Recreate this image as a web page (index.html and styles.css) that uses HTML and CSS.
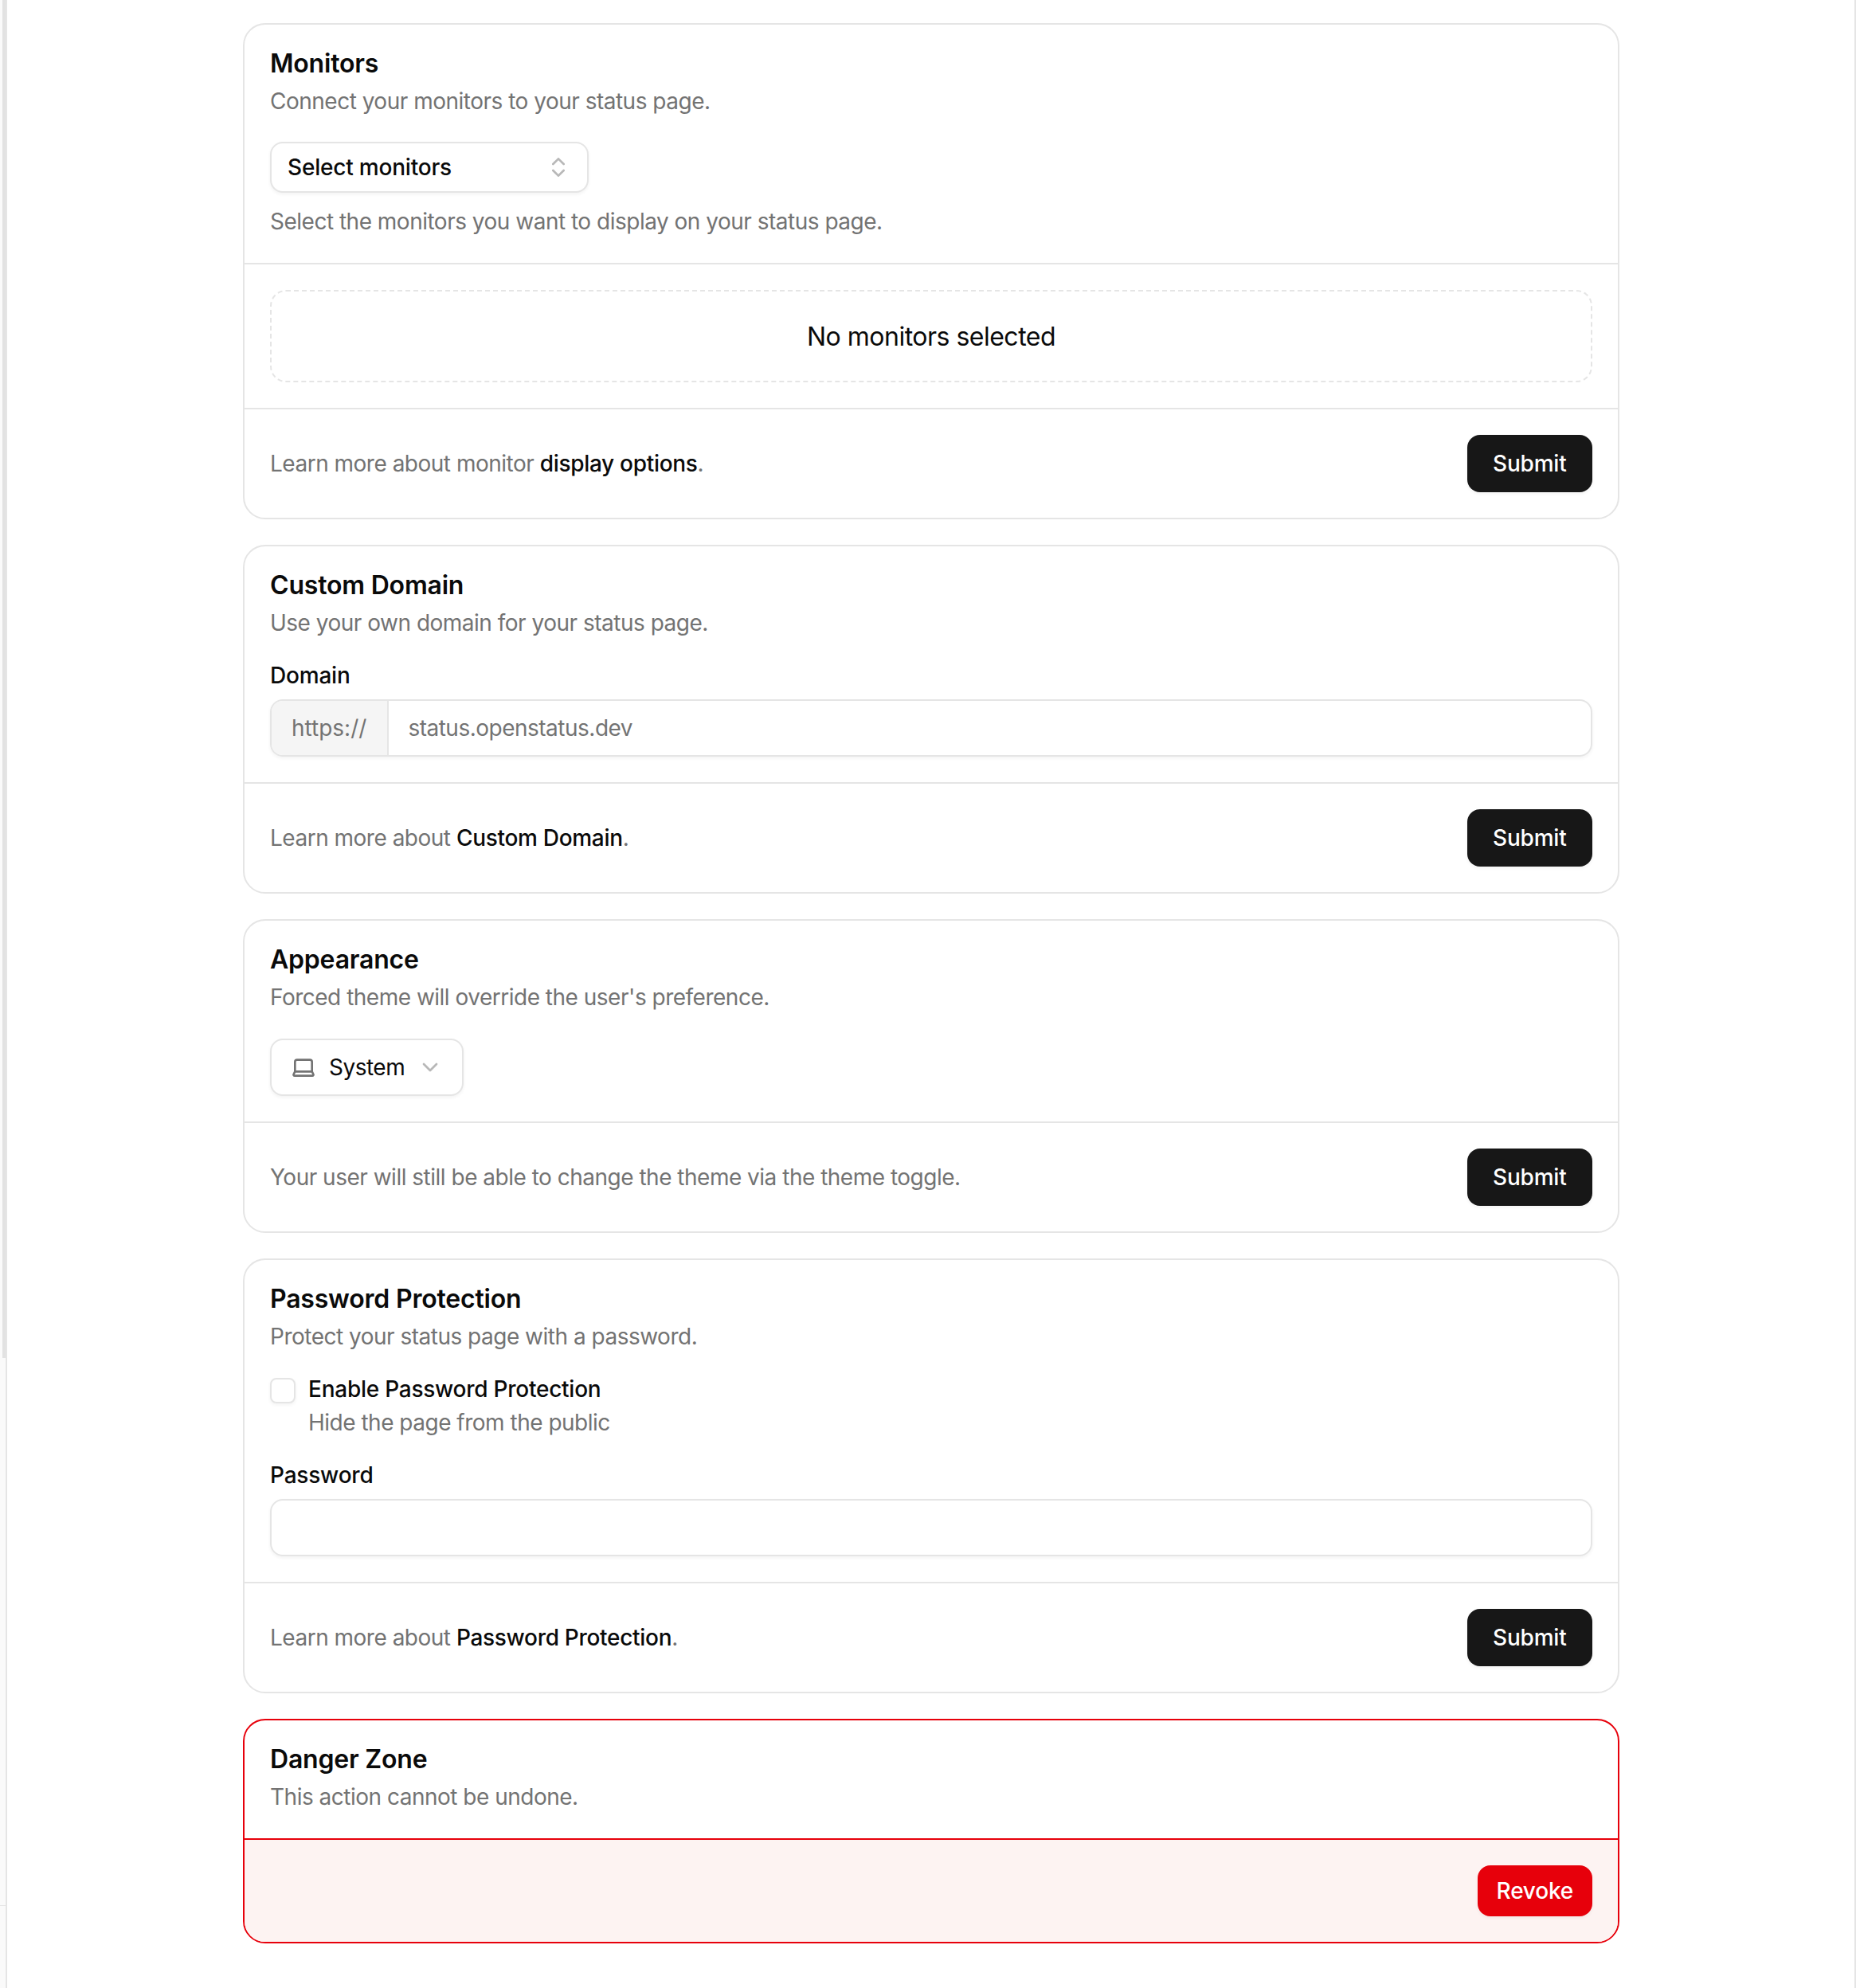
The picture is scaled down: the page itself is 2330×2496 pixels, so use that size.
FILE: index.html
```html
<!DOCTYPE html>
<html lang="en">
<head>
    <meta charset="UTF-8">
    <meta name="viewport" content="width=device-width, initial-scale=1.0">
    <title>Status page settings</title>
    <link rel="stylesheet" href="styles.css">
</head>
<body>

<aside class="rail">
    <div class="rail-thumb"></div>
    <div class="rail-foot"></div>
</aside>

<main class="page">

    <form class="card">
        <section class="card-section">
            <h2 class="card-title">Monitors</h2>
            <p class="card-desc">Connect your monitors to your status page.</p>
            <button type="button" class="monitor-select">
                <span>Select monitors</span>
                <svg class="icon icon-faded" viewBox="0 0 24 24"><path d="m7 15 5 5 5-5"/><path d="m7 9 5-5 5 5"/></svg>
            </button>
            <p class="field-help">Select the monitors you want to display on your status page.</p>
        </section>
        <section class="card-section">
            <div class="empty-box">No monitors selected</div>
        </section>
        <footer class="card-footer">
            <p>Learn more about monitor <a href="#">display options</a>.</p>
            <button type="button" class="btn-submit">Submit</button>
        </footer>
    </form>

    <form class="card">
        <section class="card-section">
            <h2 class="card-title">Custom Domain</h2>
            <p class="card-desc">Use your own domain for your status page.</p>
            <label class="field-label" for="domain">Domain</label>
            <div class="input-group">
                <span class="input-prefix">https://</span>
                <input class="input-bare" type="text" id="domain" placeholder="status.openstatus.dev">
            </div>
        </section>
        <footer class="card-footer">
            <p>Learn more about <a href="#">Custom Domain</a>.</p>
            <button type="button" class="btn-submit">Submit</button>
        </footer>
    </form>

    <form class="card">
        <section class="card-section">
            <h2 class="card-title">Appearance</h2>
            <p class="card-desc">Forced theme will override the user's preference.</p>
            <button type="button" class="theme-select">
                <svg class="icon icon-muted" viewBox="0 0 24 24"><path d="M20 16V7a2 2 0 0 0-2-2H6a2 2 0 0 0-2 2v9m16 0H4m16 0 1.28 2.55a1 1 0 0 1-.9 1.45H3.62a1 1 0 0 1-.9-1.45L4 16"/></svg>
                <span>System</span>
                <svg class="icon icon-faded" viewBox="0 0 24 24"><path d="m6 9 6 6 6-6"/></svg>
            </button>
        </section>
        <footer class="card-footer">
            <p>Your user will still be able to change the theme via the theme toggle.</p>
            <button type="button" class="btn-submit">Submit</button>
        </footer>
    </form>

    <form class="card">
        <section class="card-section">
            <h2 class="card-title">Password Protection</h2>
            <p class="card-desc">Protect your status page with a password.</p>
            <div class="check-row">
                <input class="check" type="checkbox" id="enablePassword">
                <div>
                    <label class="check-label" for="enablePassword">Enable Password Protection</label>
                    <p class="check-help">Hide the page from the public</p>
                </div>
            </div>
            <label class="field-label" for="password">Password</label>
            <input class="input" type="password" id="password">
        </section>
        <footer class="card-footer">
            <p>Learn more about <a href="#">Password Protection</a>.</p>
            <button type="button" class="btn-submit">Submit</button>
        </footer>
    </form>

    <form class="card card-danger">
        <section class="card-section">
            <h2 class="card-title">Danger Zone</h2>
            <p class="card-desc">This action cannot be undone.</p>
        </section>
        <footer class="card-footer">
            <button type="button" class="btn-revoke">Revoke</button>
        </footer>
    </form>

</main>

</body>
</html>
```

FILE: styles.css
```css
* {
    box-sizing: border-box;
}

body {
    margin: 0;
    min-height: 2496px;
    display: flex;
    background-color: #fff;
    color: #0a0a0a;
    font-family: Inter, "Liberation Sans", sans-serif;
    font-size: 28px;
    letter-spacing: -0.5px;
    line-height: 40px;
}

.rail {
    width: 9px;
    flex-shrink: 0;
    display: flex;
    flex-direction: column;
    background-color: #fafafa;
    border-right: 2px solid #e5e5e5;
}

.rail-thumb {
    width: 4px;
    height: 1705px;
    margin-left: 3px;
    background-color: #e2e2e2;
}

.rail-foot {
    margin-top: auto;
    height: 104px;
    border-top: 1px solid #e5e5e5;
}

.page {
    flex: 1;
    display: flex;
    flex-direction: column;
    gap: 32px;
    padding: 29px 295px 0 296px;
    border-right: 2px solid #e5e5e5;
}

.card {
    width: 1728px;
    border: 2px solid #e5e5e5;
    border-radius: 28px;
    overflow: hidden;
}

.card-section {
    padding: 32px;
    border-bottom: 2px solid #e5e5e5;
}

.card-title {
    margin: 0;
    font-size: 32px;
    font-weight: 600;
    letter-spacing: -0.2px;
    line-height: 34px;
}

.card-desc {
    margin: 10px 0 0;
    color: #737373;
}

.card-footer {
    display: flex;
    justify-content: space-between;
    align-items: center;
    padding: 32px;
    color: #737373;
}

.card-footer p {
    margin: 0;
}

.card-footer a {
    color: #0a0a0a;
    font-weight: 500;
    letter-spacing: -0.3px;
    text-decoration: none;
}

.icon {
    width: 32px;
    height: 32px;
    flex-shrink: 0;
    fill: none;
    stroke: currentColor;
    stroke-width: 2;
    stroke-linecap: round;
    stroke-linejoin: round;
}

.icon-muted {
    color: #737373;
}

.icon-faded {
    color: #737373;
    opacity: 0.5;
}

.monitor-select,
.theme-select {
    display: flex;
    align-items: center;
    background-color: #fff;
    border: 2px solid #e5e5e5;
    border-radius: 16px;
    box-shadow: 0 2px 4px rgba(0, 0, 0, 0.05);
    color: inherit;
    font: inherit;
    letter-spacing: inherit;
}

.monitor-select {
    width: 400px;
    height: 64px;
    justify-content: space-between;
    margin-top: 31px;
    padding: 0 20px;
    font-weight: 500;
    letter-spacing: -0.2px;
}

.theme-select {
    height: 72px;
    gap: 16px;
    margin-top: 32px;
    padding: 0 24px;
}

.field-help {
    margin: 16px 0 0;
    color: #737373;
}

.empty-box {
    padding: 33px 32px 31px;
    border: 2px dashed #e5e5e5;
    border-radius: 20px;
    font-size: 32px;
    line-height: 48px;
    text-align: center;
}

.field-label {
    display: block;
    margin: 32px 0 16px;
    font-weight: 500;
    letter-spacing: -0.2px;
    line-height: 28px;
}

.input-group {
    display: flex;
    height: 72px;
    border: 2px solid #e5e5e5;
    border-radius: 16px;
    box-shadow: 0 2px 4px rgba(0, 0, 0, 0.05);
    overflow: hidden;
}

.input-prefix {
    display: flex;
    align-items: center;
    padding: 0 26px 0 25px;
    background-color: #f5f5f5;
    border-right: 2px solid #e5e5e5;
    color: #737373;
    letter-spacing: 0;
}

.input-bare,
.input {
    width: 100%;
    height: 100%;
    padding: 0 24px;
    background: none;
    border: none;
    color: inherit;
    font: inherit;
    letter-spacing: inherit;
}

.input-bare::placeholder {
    color: #737373;
    opacity: 1;
}

.input {
    display: block;
    height: 72px;
    border: 2px solid #e5e5e5;
    border-radius: 16px;
    box-shadow: 0 2px 4px rgba(0, 0, 0, 0.05);
}

.check-row {
    display: flex;
    gap: 16px;
    margin-top: 32px;
}

.check {
    width: 32px;
    height: 32px;
    margin: 0;
    appearance: none;
    background-color: #fff;
    border: 2px solid #e5e5e5;
    border-radius: 8px;
    box-shadow: 0 2px 4px rgba(0, 0, 0, 0.05);
}

.check-label {
    display: block;
    font-weight: 500;
    letter-spacing: -0.25px;
    line-height: 28px;
}

.check-help {
    margin: 8px 0 0;
    color: #737373;
}

.btn-submit,
.btn-revoke {
    border: none;
    border-radius: 16px;
    box-shadow: 0 2px 4px rgba(0, 0, 0, 0.05);
    color: #fff;
    font: inherit;
    font-weight: 500;
    letter-spacing: -0.2px;
}

.btn-submit {
    height: 72px;
    padding: 0 32.5px;
    background-color: #171717;
}

.btn-revoke {
    height: 64px;
    margin-left: auto;
    padding: 0 24px;
    background-color: #e7000b;
}

.card-danger {
    border-color: #e7000b;
}

.card-danger .card-section {
    border-bottom-color: #e7000b;
}

.card-danger .card-footer {
    background-color: #fdf3f2;
}
```
